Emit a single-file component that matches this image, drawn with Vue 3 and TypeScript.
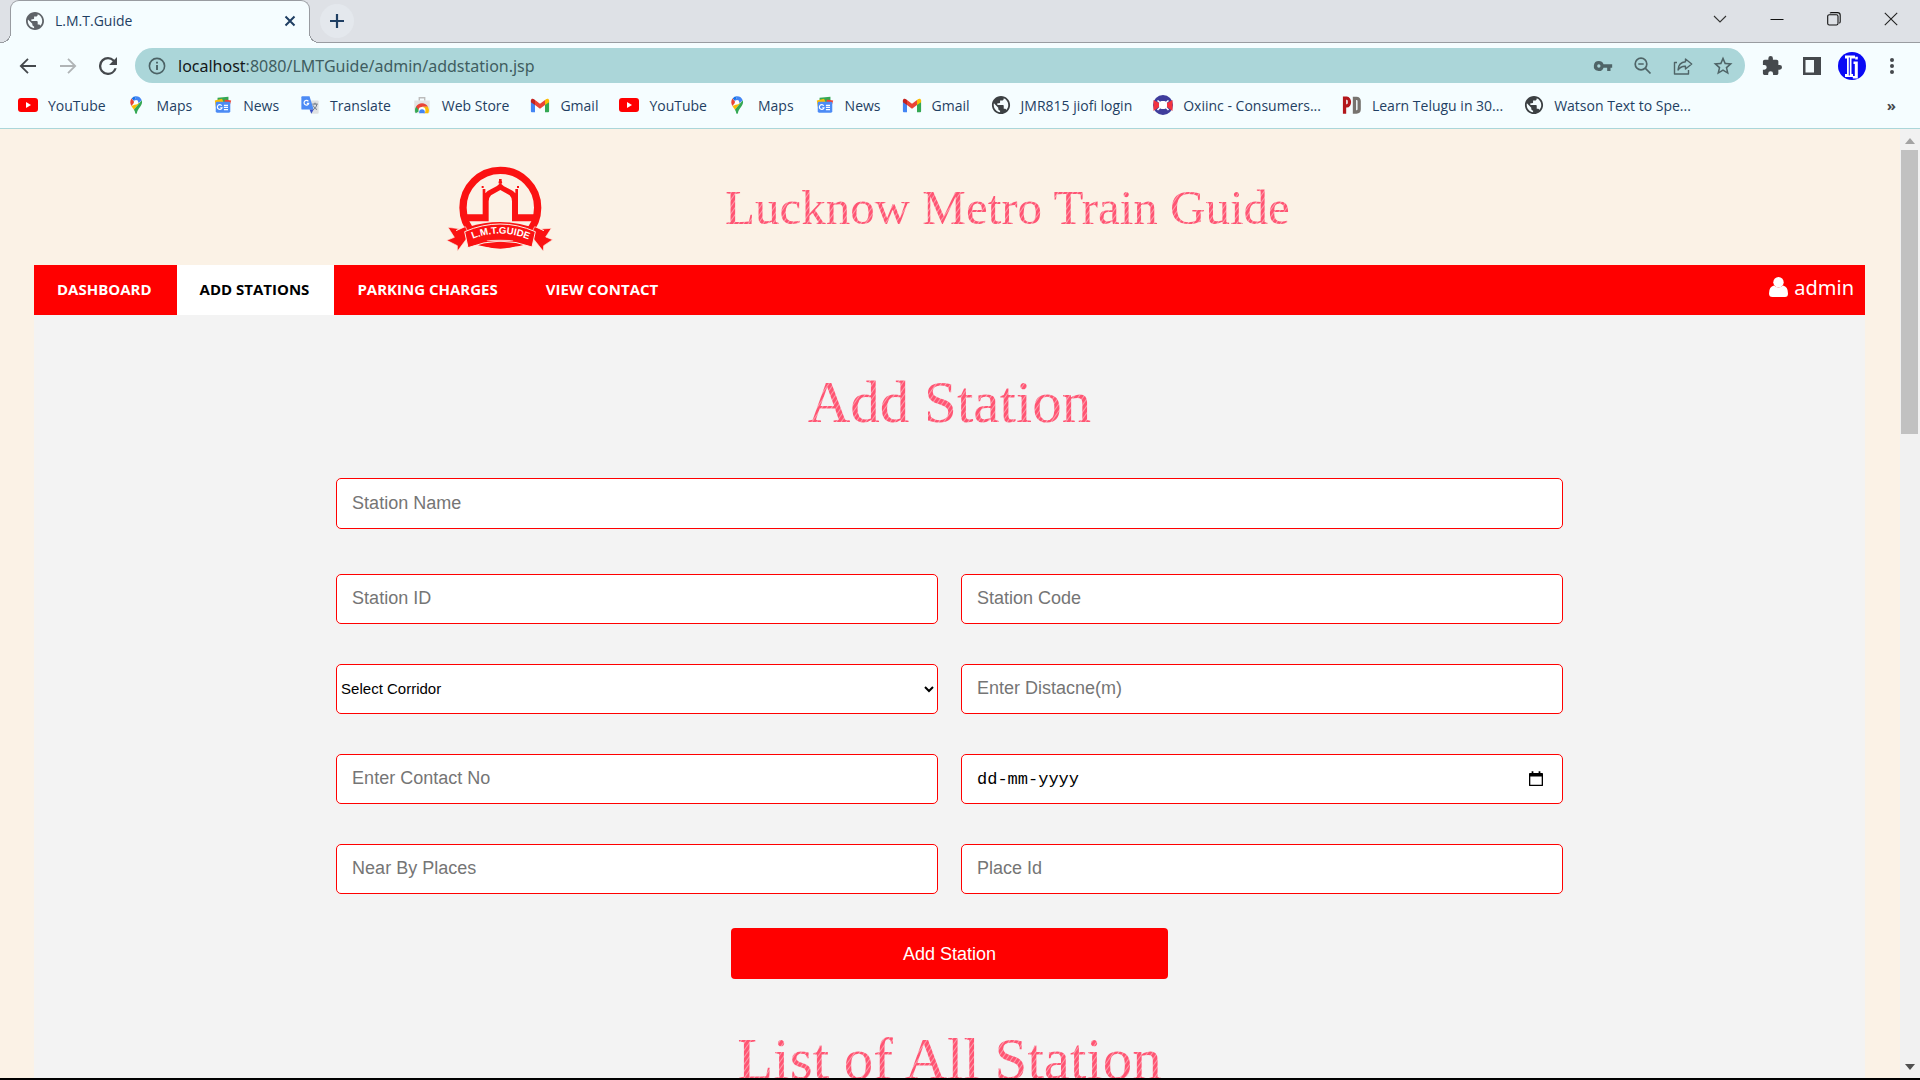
<script setup lang="ts">
import { ref } from 'vue'

type Mark = 'youtube' | 'maps' | 'news' | 'translate' | 'store' | 'gmail' | 'globe' | 'oxiinc' | 'pd'

interface Bookmark {
  icon: Mark
  label: string
}

interface Field {
  id: string
  label: string
  kind: 'text' | 'select' | 'date'
  wide?: boolean
}

const bookmarks: Bookmark[] = [
  { icon: 'youtube', label: 'YouTube' },
  { icon: 'maps', label: 'Maps' },
  { icon: 'news', label: 'News' },
  { icon: 'translate', label: 'Translate' },
  { icon: 'store', label: 'Web Store' },
  { icon: 'gmail', label: 'Gmail' },
  { icon: 'youtube', label: 'YouTube' },
  { icon: 'maps', label: 'Maps' },
  { icon: 'news', label: 'News' },
  { icon: 'gmail', label: 'Gmail' },
  { icon: 'globe', label: 'JMR815 jiofi login' },
  { icon: 'oxiinc', label: 'Oxiinc - Consumers...' },
  { icon: 'pd', label: 'Learn Telugu in 30...' },
  { icon: 'globe', label: 'Watson Text to Spe...' },
]

// The YouTube and Oxiinc marks fill the whole icon box; the others keep a small margin.
const markBox = (icon: Mark): string =>
  icon === 'youtube' || icon === 'oxiinc' ? '0 0 20 20' : '-1 -1 22 22'

const links = ['DASHBOARD', 'ADD STATIONS', 'PARKING CHARGES', 'VIEW CONTACT']
const activeLink = ref('ADD STATIONS')

const fields: Field[] = [
  { id: 'name', label: 'Station Name', kind: 'text', wide: true },
  { id: 'station-id', label: 'Station ID', kind: 'text' },
  { id: 'code', label: 'Station Code', kind: 'text' },
  { id: 'corridor', label: 'Select Corridor', kind: 'select' },
  { id: 'distance', label: 'Enter Distacne(m)', kind: 'text' },
  { id: 'contact', label: 'Enter Contact No', kind: 'text' },
  { id: 'date', label: 'dd-mm-yyyy', kind: 'date' },
  { id: 'places', label: 'Near By Places', kind: 'text' },
  { id: 'place-id', label: 'Place Id', kind: 'text' },
]

const globePath =
  'M12 2C6.48 2 2 6.48 2 12s4.48 10 10 10 10-4.48 10-10S17.52 2 12 2zm-1 17.93c-3.95-.49-7-3.85-7-7.93 0-.62.08-1.21.21-1.79L9 15v1c0 1.1.9 2 2 2v1.93zm6.9-2.54c-.26-.81-1-1.39-1.9-1.39h-1v-3c0-.55-.45-1-1-1H8v-2h2c.55 0 1-.45 1-1V7h2c1.1 0 2-.9 2-2v-.41c2.93 1.19 5 4.06 5 7.41 0 2.08-.8 3.97-2.1 5.39z'
</script>

<template>
  <div class="window">
    <div class="strip">
      <div class="tab">
        <svg class="tab-icon" viewBox="2 2 20 20"><path fill="#5f6368" :d="globePath" /></svg>
        <span class="tab-title">L.M.T.Guide</span>
        <button class="plain tab-close" aria-label="Close tab">
          <svg width="12" height="12" viewBox="0 0 12 12"><path d="M1.5 1.5l9 9M10.5 1.5l-9 9" stroke="#1f3f63" stroke-width="2" /></svg>
        </button>
      </div>
      <button class="plain new-tab" aria-label="New tab">
        <svg width="16" height="16" viewBox="0 0 16 16"><path d="M8 1v14M1 8h14" stroke="#1f3f63" stroke-width="2.2" /></svg>
      </button>
      <div class="win-controls">
        <button class="plain" aria-label="Search tabs">
          <svg width="14" height="14" viewBox="0 0 14 14"><path d="M1 4l6 6 6-6" fill="none" stroke="#333" stroke-width="1.1" /></svg>
        </button>
        <button class="plain" aria-label="Minimize">
          <svg width="14" height="14" viewBox="0 0 14 14"><path d="M.5 7.5h13" stroke="#111" /></svg>
        </button>
        <button class="plain" aria-label="Restore">
          <svg width="14" height="14" viewBox="0 0 14 14"><g fill="none" stroke="#111" stroke-width="1.1"><rect x=".7" y="2.7" width="10.3" height="10.3" rx="1.6" /><path d="M3 1.2Q3.400 .6 4.500 .6H10.500Q13.200 .6 13.200 3.300V9.500Q13.200 11 12.300 11.300" /></g></svg>
        </button>
        <button class="plain" aria-label="Close">
          <svg width="14" height="14" viewBox="0 0 14 14"><path d="M.8 .8l12.400 12.400M13.200 .8L.8 13.200" stroke="#222" stroke-width="1.1" /></svg>
        </button>
      </div>
    </div>

    <div class="toolbar">
      <div class="nav-buttons">
        <button class="plain" aria-label="Back">
          <svg width="18" height="18" viewBox="0 0 18 18"><path d="M17 9H2M9 1.800L1.800 9 9 16.200" fill="none" stroke="#45494d" stroke-width="1.800" /></svg>
        </button>
        <button class="plain" aria-label="Forward">
          <svg width="18" height="18" viewBox="0 0 18 18"><path d="M1 9h15M9 1.800L16.200 9 9 16.200" fill="none" stroke="#b0b4b6" stroke-width="1.800" /></svg>
        </button>
        <button class="plain" aria-label="Reload">
          <svg width="18" height="18" viewBox="4 4 16 16"><path fill="#45494d" d="M17.650 6.350A7.958 7.958 0 0 0 12 4a8 8 0 1 0 7.730 10h-2.080A5.990 5.990 0 0 1 12 18a6 6 0 1 1 0-12c1.660 0 3.140.690 4.220 1.780L13 11h7V4z" /></svg>
        </button>
      </div>
      <div class="address">
        <svg class="info" viewBox="0 0 18 18"><circle cx="9" cy="9" r="7.600" fill="none" stroke="#4b6265" stroke-width="1.600" /><path d="M9 8v5M9 4.800v1.800" stroke="#4b6265" stroke-width="1.900" /></svg>
        <span class="url"><b>localhost</b>:8080/LMTGuide/admin/addstation.jsp</span>
        <div class="address-icons">
          <button class="plain" aria-label="Passwords">
            <svg width="20" height="20" viewBox="0 0 24 24"><path fill="#4f6467" d="M12.650 10A5.990 5.990 0 0 0 7 6a6 6 0 1 0 5.650 8H17v4h4v-4h2v-4H12.650zM7 14a2 2 0 1 1 0-4 2 2 0 0 1 0 4z" /></svg>
          </button>
          <button class="plain" aria-label="Zoom out">
            <svg width="20" height="20" viewBox="0 0 20 20"><g fill="none" stroke="#4f6467" stroke-width="1.700"><circle cx="8" cy="8" r="5.800" /><path d="M12.200 12.200l5.300 5.300M5.300 8h5.400" /></g></svg>
          </button>
          <button class="plain" aria-label="Share">
            <svg width="20" height="20" viewBox="0 0 20 20"><g fill="none" stroke="#4f6467" stroke-width="1.400" stroke-linejoin="round"><path d="M4 6.500H1.500V18H15.500v-4" /><path d="M12.500 3l6.200 5-6.200 5V10.200C9.500 10 7 11 5 14 5.300 9.500 8 6.200 12.500 5.800z" /></g></svg>
          </button>
          <button class="plain" aria-label="Bookmark">
            <svg width="20" height="20" viewBox="1.500 1.500 21 21"><path fill="#4f6467" d="M22 9.240l-7.190-.620L12 2 9.190 8.630 2 9.240l5.460 4.730L5.820 21 12 17.270 18.180 21l-1.630-7.030L22 9.240zM12 15.400l-3.760 2.270 1-4.280-3.320-2.880 4.380-.380L12 6.100l1.710 4.040 4.380.380-3.320 2.880 1 4.280L12 15.400z" /></svg>
          </button>
        </div>
      </div>
      <div class="tools">
        <button class="plain" aria-label="Extensions">
          <svg width="20" height="20" viewBox="1 1 22 22"><path fill="#45494d" d="M20.500 11H19V7c0-1.100-.9-2-2-2h-4V3.500a2.500 2.500 0 0 0-5 0V5H4c-1.100 0-1.990.9-1.990 2v3.800H3.500a2.700 2.700 0 0 1 0 5.400H2V20c0 1.100.9 2 2 2h3.800v-1.500a2.700 2.700 0 0 1 5.400 0V22H17c1.100 0 2-.9 2-2v-4h1.500a2.500 2.500 0 0 0 0-5z" /></svg>
        </button>
        <button class="plain" aria-label="Side panel">
          <svg width="20" height="20" viewBox="0 0 20 20"><path fill="#45494d" fill-rule="evenodd" d="M1 1h18v18H1zM3.500 4v12.500h8.500V4z" /></svg>
        </button>
        <button class="plain" aria-label="Profile">
          <svg width="28" height="28" viewBox="0 0 28 28">
            <circle cx="14" cy="14" r="14" fill="#0a0af5" />
            <path d="M7 3.500h10v3h-3.500v15.500H15v3H7v-3h2V6.500H7z" fill="#fff" />
            <path d="M10.800 5.500h1v18h-1z" fill="#0a0af5" />
            <path d="M15.500 9.500h4.300v17h-5v-2.600h2V12h-1.300zM17.200 4.800h2.600v2.600h-2.600z" fill="#fff" />
          </svg>
        </button>
        <button class="plain" aria-label="Menu">
          <svg width="20" height="20" viewBox="0 0 20 20"><g fill="#45494d"><circle cx="10" cy="4" r="2" /><circle cx="10" cy="10" r="2" /><circle cx="10" cy="16" r="2" /></g></svg>
        </button>
      </div>
    </div>

    <div class="bookmarks">
      <a v-for="(b, i) in bookmarks" :key="i" class="bookmark" href="#">
        <svg width="20" height="20" :viewBox="markBox(b.icon)">
          <template v-if="b.icon === 'youtube'">
            <rect y="3" width="20" height="14" rx="3" fill="#f00" /><path d="M8 7l5 3-5 3z" fill="#fff" />
          </template>
          <template v-else-if="b.icon === 'maps'">
            <path d="M9 .5A6.500 6.500 0 0 0 4 2.900L7 6z" fill="#1a73e8" />
            <path d="M9 .5c3 0 5.300 1.800 6.200 4.400L11 8.500 7 6z" fill="#4285f4" />
            <path d="M4 2.900C2 5.500 2.300 8.500 3.800 11L7.200 7z" fill="#ea4335" />
            <path d="M3.800 11c1 1.600 2 2.500 2.800 4.200L13 7.500z" fill="#fbbc04" />
            <path d="M15.200 4.900c1 3-.2 5.200-1.700 7.100C11.300 15 10.500 16 9.900 19c-.3 1-1.500 1-1.800 0-.3-1.500-.7-2.700-1.500-3.800z" fill="#34a853" />
            <circle cx="9" cy="7" r="2.400" fill="#fff" />
          </template>
          <template v-else-if="b.icon === 'news'">
            <path d="M4 2l12-1v8H4z" fill="#34a853" /><path d="M1 5l8-2 2 5-9 4z" fill="#fbbc04" /><path d="M12 4l7 1-2 7h-6z" fill="#ea4335" />
            <rect x="2" y="6.500" width="16" height="12" rx="1.500" fill="#4c8bf5" />
            <path d="M8.600 10.800a2.600 2.600 0 1 0 .3 2.200H7M11 10.500h4.500M11 12.700h4.500M11 15h4.500" fill="none" stroke="#fff" stroke-width="1.300" />
          </template>
          <template v-else-if="b.icon === 'translate'">
            <path d="M8 5h10.500q1 0 1 1v12.500q0 1-1 1H11z" fill="#dfe1e3" /><path d="M1.500.5h8L14 15H1.500q-1 0-1-1V1.500q0-1 1-1z" fill="#4c8bf5" />
            <path d="M9.500 15H14l-2.500 4.500z" fill="#3a4fc4" />
            <path d="M8.200 6a2.600 2.600 0 1 0 .4 2.200H6.500" fill="none" stroke="#fff" stroke-width="1.300" />
            <path d="M12.500 9h6M15.500 7.500V9M17.500 9.300c-.5 3-2 4.500-4 6M13.500 10.500c.8 2 2 3.500 4.200 4.500" fill="none" stroke="#606a78" />
          </template>
          <template v-else-if="b.icon === 'store'">
            <path d="M1.500 5h17v12q0 2-2 2h-13q-2 0-2-2z" fill="#e3e3e3" /><path d="M7 5V2h6v3" fill="none" stroke="#bcbcbc" stroke-width="1.500" />
            <path d="M3 19a7.300 7.300 0 0 1 .7-7.300L10 15z" fill="#34a853" /><path d="M3.400 12A7.500 7.500 0 0 1 16.600 12H10l-3 4z" fill="#ea4335" /><path d="M10 12h6.600q2 3.500.4 7h-6z" fill="#fbbc04" />
            <circle cx="10" cy="16" r="3.800" fill="#fff" /><path d="M7 19a3.200 3.200 0 1 1 6 0z" fill="#4285f4" />
          </template>
          <template v-else-if="b.icon === 'gmail'">
            <path d="M0 5v12q0 1 1 1h3.500V8z" fill="#4285f4" /><path d="M20 5v12q0 1-1 1h-3.500V8z" fill="#34a853" />
            <path d="M4.500 4.500l5.500 4 5.500-4V10L10 14l-5.500-4z" fill="#ea4335" /><path d="M0 5c0-2 2-2.500 3.500-1.400l1 .8v5.600L0 7z" fill="#c5221f" /><path d="M20 5c0-2-2-2.500-3.500-1.400l-1 .8v5.600L20 7z" fill="#fbbc04" />
          </template>
          <path v-else-if="b.icon === 'globe'" fill="#3c4043" transform="translate(-2 -2)" :d="globePath" />
          <template v-else-if="b.icon === 'oxiinc'">
            <circle cx="10" cy="10" r="7" fill="none" stroke="#3f3d9c" stroke-width="6" />
            <path d="M.5 5L6 8v4L.5 16zM19.500 5L14 8v4l5.500 4z" fill="#f3333f" />
            <path d="M4.500 5.500l3 2.500M15.500 5.500l-3 2.500M4.500 15l3-3M15.500 15l-3-3" stroke="#fff" stroke-width="1.600" />
            <circle cx="10" cy="10" r="4" fill="#fff" />
          </template>
          <template v-else>
            <path fill="none" stroke="#b3161b" stroke-width="3.600" d="M1.800 19.500V2.500h2.500a2.400 3.500 0 0 1 0 8.500H3" />
            <path fill="none" stroke="#77736f" stroke-width="3.600" d="M12.700 2.700v15h2.200q3 0 3-3V5.700q0-3-3-3z" />
          </template>
        </svg>
        <span>{{ b.label }}</span>
      </a>
      <button class="plain more" aria-label="More bookmarks">»</button>
    </div>

    <div class="viewport">
      <div class="page">
        <header class="banner">
          <svg class="logo" viewBox="48 42 321 264">
            <circle cx="211" cy="170" r="112" fill="none" stroke="#fb1212" stroke-width="22" />
            <path d="M105 190h53v-76h8v13q4-7 18-13 18-7 27-18 8 10 27 18 13 5 18 13v-13h8v76h54v21h-72v-60q0-11-7-18l-28-16-28 16q-7 7-7 18v60h-71z" fill="#fb1212" />
            <path d="M207 84h8v6q3 4 0 8h-8q-3-4 0-8zM155 105h6v6h-6zM261 105h6v6h-6z" fill="#fb1212" />
            <path d="M115 228q95-30 190 0l-10 50q-80 25-168 0z" fill="#fb1212" />
            <path d="M78 239l28-12 12 24-8 12-28 38 0-17-32-16 23-9-19-30 34 4zM342 239l-28-12-12 24 8 12 30 38 1-17 27-18-21-8 17-26-32 2z" fill="#fb1212" stroke="#fbf1e6" stroke-width="2" />
            <path d="M104 242q106-46 212 0l-10 46q-96-36-192 2z" fill="#fb1212" stroke="#fbf1e6" stroke-width="3" />
            <ellipse cx="210" cy="269" rx="40" ry="3" fill="#fbc4be" />
            <path id="ribbon" d="M118 268Q211 226 306 270" fill="none" />
            <text class="logo-text"><textPath href="#ribbon" startOffset="50%" text-anchor="middle">L.M.T.GUIDE</textPath></text>
          </svg>
          <h1 class="sketch title">Lucknow Metro Train Guide</h1>
        </header>

        <nav class="menu">
          <a v-for="l in links" :key="l" href="#" :class="{ active: l === activeLink }" @click.prevent="activeLink = l">{{ l }}</a>
          <a class="user" href="#">
            <svg width="20" height="20" viewBox="0 0 20 20"><path d="M5 8.500Q0 9.500 0 16.500 0 20 3.500 20h12.500Q19 20 19 16.500 19 9.500 14 8.500 9.500 12.500 5 8.500z" fill="#fff" /><circle cx="9.500" cy="5.200" r="5.200" fill="#fff" /></svg>
            <span>admin</span>
          </a>
        </nav>

        <main class="panel">
          <h2 class="sketch">Add Station</h2>
          <form class="form" @submit.prevent>
            <div v-for="f in fields" :key="f.id" class="field" :class="{ wide: f.wide }">
              <select v-if="f.kind === 'select'" :id="f.id" class="control" :aria-label="f.label">
                <option>{{ f.label }}</option>
              </select>
              <template v-else>
                <input :id="f.id" class="control" :class="{ date: f.kind === 'date' }" type="text" :placeholder="f.label" :aria-label="f.label" />
                <button v-if="f.kind === 'date'" type="button" class="plain calendar" aria-label="Open calendar">
                  <svg width="14" height="16" viewBox="0 0 16 18"><path fill="#000" fill-rule="evenodd" d="M3 0h2v2h6V0h2v2h2q1 0 1 1v13q0 1-1 1H1q-1 0-1-1V3q0-1 1-1h2zM1.500 6v9.500h13V6z" /></svg>
                </button>
              </template>
            </div>
            <button class="submit" type="submit">Add Station</button>
          </form>
          <h2 class="sketch">List of All Station</h2>
        </main>
      </div>
      <div class="scrollbar">
        <svg width="10" height="6" viewBox="0 0 10 6"><path d="M0 6l5-6 5 6z" fill="#a3a3a3" /></svg>
        <div class="thumb"></div>
        <svg width="10" height="6" viewBox="0 0 10 6"><path d="M0 0l5 6 5-6z" fill="#505050" /></svg>
      </div>
    </div>
  </div>
</template>

<style>
body {
  margin: 0;
  overflow: hidden;
}
</style>

<style scoped>
.window {
  display: flex;
  flex-direction: column;
  height: 100vh;
  box-sizing: border-box;
  border-bottom: 2px solid #000;
  background: #f5fdff;
  font-family: "Open Sans", "Noto Sans", sans-serif;
  font-size: 14px;
  color: #1f3f63;
}
.window * {
  box-sizing: border-box;
}
.plain {
  display: flex;
  align-items: center;
  justify-content: center;
  padding: 0;
  border: 0;
  background: none;
}
svg {
  display: block;
  flex: none;
}

/* tab strip */
.strip {
  display: flex;
  flex: none;
  height: 43px;
  padding-left: 10px;
  background: #dee1e6;
  border-bottom: 1px solid #999ca1;
}
.tab {
  position: relative;
  display: flex;
  align-items: center;
  width: 300px;
  height: 43px;
  padding: 0 13px 3px 15px;
  background: #f5fdff;
  border: 1px solid #999ca1;
  border-bottom: 0;
  border-radius: 9px 9px 0 0;
}
.tab::before,
.tab::after {
  content: "";
  position: absolute;
  bottom: 0;
  width: 10px;
  height: 10px;
}
.tab::before {
  left: -10px;
  background: radial-gradient(circle at 0 0, #dee1e6 9px, #999ca1 9px, #999ca1 10px, #f5fdff 10px);
}
.tab::after {
  right: -10px;
  background: radial-gradient(circle at 100% 0, #dee1e6 9px, #999ca1 9px, #999ca1 10px, #f5fdff 10px);
}
.tab-icon {
  width: 18px;
  height: 18px;
}
.tab-title {
  flex: 1;
  margin-left: 11px;
}
.new-tab {
  width: 34px;
  height: 34px;
  margin: 4px 0 0 10px;
  border-radius: 50%;
  background: #e4e8ed;
}
.win-controls {
  display: flex;
  margin-left: auto;
  padding-right: 1px;
  height: 37px;
}
.win-controls button {
  width: 57px;
}

/* toolbar */
.toolbar {
  display: flex;
  flex: none;
  align-items: center;
  height: 45px;
}
.nav-buttons {
  display: flex;
  padding-left: 8px;
}
.nav-buttons button {
  width: 40px;
}
.address {
  display: flex;
  flex: 1;
  align-items: center;
  height: 35px;
  margin-left: 7px;
  padding: 0 12px 0 13px;
  border-radius: 18px;
  background: #abd6d9;
}
.info {
  width: 18px;
  height: 18px;
}
.url {
  margin-left: 12px;
  font-family: "Noto Sans", "Open Sans", sans-serif;
  font-size: 16px;
  color: #3f5d60;
}
.url b {
  font-weight: 400;
  color: #14181a;
}
.address-icons {
  display: flex;
  gap: 20px;
  margin-left: auto;
}
.tools {
  display: flex;
  gap: 2px;
  padding: 0 9px 0 8px;
}
.tools button {
  width: 38px;
}

/* bookmarks */
.bookmarks {
  display: flex;
  flex: none;
  align-items: center;
  gap: 21px;
  height: 41px;
  padding: 0 24px 6px 18px;
  border-bottom: 1px solid #abd6d9;
}
.bookmark {
  display: flex;
  align-items: center;
  gap: 10px;
  color: inherit;
  text-decoration: none;
  white-space: nowrap;
}
.more {
  margin-left: auto;
  font: 700 15px "Open Sans", sans-serif;
  color: #45494d;
}

/* page */
.viewport {
  display: flex;
  flex: 1;
  min-height: 0;
  overflow: hidden;
}
.page {
  flex: 1;
  padding: 0 35px 0 34px;
  background: #fbf2e6;
}
.banner {
  display: grid;
  grid-template-columns: 519px auto;
  justify-content: start;
  column-gap: 172px;
  height: 136px;
}
.logo {
  justify-self: end;
  width: 107px;
  height: 88px;
  margin-top: 36px;
}
.logo-text {
  font: 700 29px "Liberation Sans", sans-serif;
  fill: #fff;
}
.sketch {
  margin: 0;
  font-family: "Liberation Serif", serif;
  font-weight: 400;
  font-size: 59px;
  line-height: 64px;
  text-align: center;
  white-space: nowrap;
  color: transparent;
  background: repeating-linear-gradient(125deg, #ff5573 0, #ff5573 2px, #fd9dac 3px, #ff5573 4px);
  -webkit-background-clip: text;
  background-clip: text;
}
.title {
  align-self: start;
  margin-top: 53px;
  font-size: 49px;
  line-height: 52px;
}
.menu {
  display: flex;
  height: 50px;
  background: #f00;
}
.menu a {
  display: flex;
  align-items: center;
  padding: 0 25px 2px 23px;
  font-size: 15px;
  font-weight: 700;
  color: #fff;
  text-decoration: none;
}
.menu a.active {
  background: #fff;
  color: #000;
}
.menu a.user {
  gap: 5px;
  margin-left: auto;
  padding: 0 11px 6px 0;
  font-family: "Noto Sans", "Open Sans", sans-serif;
  font-size: 20px;
  font-weight: 400;
}
.panel {
  padding-top: 55px;
  min-height: 100%;
  background: #f3f3f3;
}
.form {
  display: grid;
  grid-template-columns: 1fr 1fr;
  gap: 40px 23px;
  width: 67%;
  margin: 44px auto 48px;
}
.field {
  position: relative;
  height: 50px;
}
.field.wide {
  grid-column: span 2;
  height: 51px;
  margin-bottom: 5px;
}
.control {
  display: block;
  width: 100%;
  height: 100%;
  padding: 0 15px 2px;
  border: 1px solid #f00;
  border-radius: 5px;
  background: #fff;
  font: 18px "Liberation Sans", sans-serif;
  color: #000;
}
.wide .control {
  padding-bottom: 0;
}
.control::placeholder {
  color: #757575;
}
select.control {
  padding: 0 4px 2px 0;
  font-size: 15px;
}
.control.date {
  padding-bottom: 0;
  font: 17px "Liberation Mono", monospace;
}
.control.date::placeholder {
  color: #000;
}
.calendar {
  position: absolute;
  top: 17px;
  right: 20px;
}
.submit {
  grid-column: span 2;
  justify-self: center;
  width: 437px;
  height: 51px;
  margin-top: -6px;
  padding: 2px 0 0;
  border: 0;
  border-radius: 4px;
  background: #f00;
  font: 18px "Liberation Sans", sans-serif;
  color: #fff;
}

/* scrollbar */
.scrollbar {
  display: flex;
  flex: none;
  flex-direction: column;
  align-items: center;
  width: 20px;
  padding: 9px 1px 8px 0;
  background: #f1f1f1;
}
.thumb {
  width: 17px;
  height: 284px;
  margin: 6px 0 auto;
  background: #c1c1c1;
}
</style>
